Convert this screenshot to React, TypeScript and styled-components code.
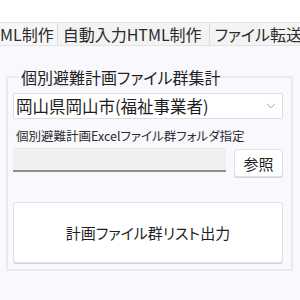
import { createGlobalStyle } from 'styled-components';
import styled from 'styled-components';
import { ChevronDown } from 'lucide-react';

const GlobalStyle = createGlobalStyle`
  body {
    margin: 0;
    background: #ffffff;
    font-family: 'Noto Sans CJK JP', 'Noto Sans', sans-serif;
    font-feature-settings: 'palt';
    color: #1f1f1f;
  }
`;

const Window = styled.div`
  width: 300px;
  height: 300px;
  display: flex;
  flex-direction: column;
  overflow: hidden;
`;

const TopSpace = styled.div`
  height: 22px;
  background: #ffffff;
`;

const TabBar = styled.div`
  display: flex;
  height: 24px;
  background: #f3f3f3;
  border-top: 1px solid #e3e3e3;
  border-bottom: 1px solid #e3e3e3;
  box-sizing: border-box;
  white-space: nowrap;
  overflow: hidden;
`;

const Tab = styled.div<{ $first?: boolean }>`
  display: flex;
  align-items: center;
  flex-shrink: 0;
  padding: ${(p) => (p.$first ? '0 3px 0 0' : '0 7px 0 5px')};
  border-right: 1px solid #dcdcdc;
  font-size: 16px;
  line-height: 22px;
  color: #2a2a2a;
  background: ${(p) => (p.$first ? '#f7f7f7' : '#f3f3f3')};
`;

const Content = styled.div`
  flex: 1;
  background: #f9f9fd;
  padding: 21px 7px 0 6px;
`;

const Group = styled.fieldset`
  margin: 0;
  padding: 6px 8px 6px 5px;
  border: 2px solid #e9e9ee;
  min-width: 0;
  display: flex;
  flex-direction: column;
`;

const Legend = styled.legend`
  margin-left: 6px;
  padding: 0 2px;
  font-size: 16px;
  line-height: 20px;
  color: #222;
`;

const Select = styled.div`
  height: 26px;
  box-sizing: border-box;
  display: flex;
  align-items: center;
  justify-content: space-between;
  padding: 0 4px 0 2px;
  background: #ffffff;
  border: 1px solid #dedee2;
  border-radius: 2px;
  font-size: 16.5px;
  color: #1c1c1c;
`;

const FieldLabel = styled.div`
  margin-top: 8px;
  padding-left: 3px;
  font-size: 12.5px;
  line-height: 17px;
  color: #2c2c2c;
`;

const PathRow = styled.div`
  margin-top: 4px;
  display: flex;
  align-items: flex-start;
  gap: 8px;
`;

const PathInput = styled.div`
  width: 214px;
  height: 24px;
  box-sizing: border-box;
  background: #f0f0f0;
  border-top: 1px solid #e6e6e6;
  border-bottom: 2px solid #8f8f8f;
  border-radius: 2px 2px 0 0;
`;

const Button = styled.button<{ $tall?: boolean }>`
  box-sizing: border-box;
  height: ${(p) => (p.$tall ? '61px' : '28px')};
  background: #ffffff;
  border: 1px solid #e0e0e4;
  border-radius: 3px;
  font-family: inherit;
  font-feature-settings: 'palt';
  font-size: 15px;
  color: #1f1f1f;
  padding: 0;
  cursor: pointer;
  box-shadow: 0 1px 0 #d6d6da;
`;

const BrowseButton = styled(Button)`
  width: 49px;
  margin-top: 1px;
`;

const RunButton = styled(Button)`
  width: 100%;
  margin-top: 25px;
`;

export default function App() {
  return (
    <Window>
      <GlobalStyle />
      <TopSpace />
      <TabBar>
        <Tab $first>ML制作</Tab>
        <Tab>自動入力HTML制作</Tab>
        <Tab>ファイル転送(</Tab>
      </TabBar>
      <Content>
        <Group>
          <Legend>個別避難計画ファイル群集計</Legend>
          <Select>
            <span>岡山県岡山市(福祉事業者)</span>
            <ChevronDown size={14} color="#8a8a8a" strokeWidth={1.4} />
          </Select>
          <FieldLabel>個別避難計画Excelファイル群フォルダ指定</FieldLabel>
          <PathRow>
            <PathInput />
            <BrowseButton>参照</BrowseButton>
          </PathRow>
          <RunButton $tall>計画ファイル群リスト出力</RunButton>
        </Group>
      </Content>
    </Window>
  );
}
